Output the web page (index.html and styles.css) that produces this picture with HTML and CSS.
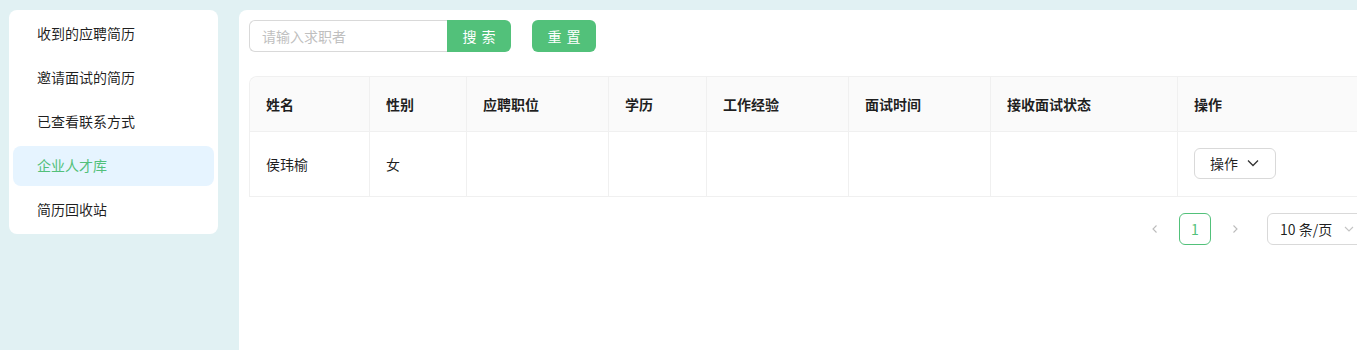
FILE: index.html
```html
<!DOCTYPE html>
<html lang="zh-CN">
<head>
    <meta charset="UTF-8">
    <meta name="viewport" content="width=device-width, initial-scale=1.0">
    <title>企业人才库</title>
    <link rel="stylesheet" href="styles.css">
</head>
<body>
    <div class="layout">
        <ul class="menu">
            <li class="menu-item">收到的应聘简历</li>
            <li class="menu-item">邀请面试的简历</li>
            <li class="menu-item">已查看联系方式</li>
            <li class="menu-item active">企业人才库</li>
            <li class="menu-item">简历回收站</li>
        </ul>

        <div class="main">
            <div class="toolbar">
                <div class="search">
                    <input type="text" placeholder="请输入求职者">
                    <button class="btn-green search-btn">搜 索</button>
                </div>
                <button class="btn-green reset-btn">重 置</button>
            </div>

            <table class="table">
                <thead>
                    <tr>
                        <th class="c1">姓名</th>
                        <th class="c2">性别</th>
                        <th class="c3">应聘职位</th>
                        <th class="c4">学历</th>
                        <th class="c5">工作经验</th>
                        <th class="c6">面试时间</th>
                        <th class="c7">接收面试状态</th>
                        <th>操作</th>
                    </tr>
                </thead>
                <tbody>
                    <tr>
                        <td>侯玮榆</td>
                        <td>女</td>
                        <td></td>
                        <td></td>
                        <td></td>
                        <td></td>
                        <td></td>
                        <td>
                            <button class="op-btn">操作
                                <svg width="14" height="14" viewBox="0 0 14 14"><path d="M2 4.5 L7 9.5 L12 4.5" fill="none" stroke="#333" stroke-width="1.3"/></svg>
                            </button>
                        </td>
                    </tr>
                </tbody>
            </table>

            <div class="pager">
                <span class="pg-arrow">
                    <svg width="10" height="10" viewBox="0 0 10 10"><path d="M6.5 1.5 L3 5 L6.5 8.5" fill="none" stroke="#bbb" stroke-width="1.1"/></svg>
                </span>
                <span class="pg-item current">1</span>
                <span class="pg-arrow">
                    <svg width="10" height="10" viewBox="0 0 10 10"><path d="M3.5 1.5 L7 5 L3.5 8.5" fill="none" stroke="#bbb" stroke-width="1.1"/></svg>
                </span>
                <div class="pg-size">
                    <span>10 条/页</span>
                    <svg width="12" height="12" viewBox="0 0 12 12"><path d="M2 4 L6 8 L10 4" fill="none" stroke="#c4c4c4" stroke-width="1.1"/></svg>
                </div>
            </div>
        </div>
    </div>
</body>
</html>
```

FILE: styles.css
```css
body {
    margin: 0;
    padding: 0;
    background-color: #e1f1f3;
    font-family: "Noto Sans CJK SC", "Noto Sans", sans-serif;
    font-size: 14px;
    color: rgba(0, 0, 0, 0.88);
    overflow: hidden;
    height: 350px;
}

.layout {
    display: flex;
    align-items: flex-start;
    gap: 21px;
    padding: 10px 0 0 9px;
}

/* menu on the left */
.menu {
    list-style: none;
    margin: 0;
    padding: 4px;
    width: 201px;
    background: #fff;
    border-radius: 8px;
    display: flex;
    flex-direction: column;
    gap: 4px;
    flex-shrink: 0;
}
.menu-item {
    height: 40px;
    line-height: 38px;
    padding-left: 24px;
    border-radius: 8px;
}
.menu-item.active {
    background: #e6f4ff;
    color: #52c07a;
}

.main {
    width: 1118px;
    flex-shrink: 0;
    min-height: 330px;
    background: #fff;
    border-radius: 8px 0 0 0;
    padding: 10px;
}

.toolbar {
    display: flex;
    gap: 21px;
}
.search {
    display: flex;
}
.search input {
    width: 198px;
    height: 32px;
    box-sizing: border-box;
    border: 1px solid #d9d9d9;
    border-right: none;
    border-radius: 6px 0 0 6px;
    padding: 0 12px;
    font-family: inherit;
    font-size: 14px;
    outline: none;
}
.search input::placeholder {
    color: #bfbfbf;
}
.btn-green {
    height: 32px;
    width: 64px;
    border: none;
    background: #52c17a;
    color: #fff;
    font-family: inherit;
    font-size: 14px;
    letter-spacing: 1px;
    padding: 0 0 1px 1px;
    border-radius: 6px;
}
.search-btn {
    border-radius: 0 6px 6px 0;
}

.table {
    width: 100%;
    margin-top: 24px;
    border-collapse: separate;
    border-spacing: 0;
    border: 1px solid #f0f0f0;
    border-bottom: none;
    border-radius: 8px 8px 0 0;
}
.table th, .table td {
    text-align: left;
    padding: 0 16px 1px;
    border-right: 1px solid #f0f0f0;
    border-bottom: 1px solid #f0f0f0;
}
.table th:last-child, .table td:last-child {
    border-right: none;
}
.table th {
    height: 53px;
    background: #fafafa;
    font-weight: 600;
    color: rgba(0, 0, 0, 0.88);
}
.table th:first-child {
    border-top-left-radius: 8px;
}
.table td {
    height: 63px;
}
.c1 { width: 87px; }
.c2 { width: 64px; }
.c3 { width: 109px; }
.c4 { width: 65px; }
.c5 { width: 109px; }
.c6 { width: 109px; }
.c7 { width: 154px; }

.op-btn {
    display: inline-flex;
    align-items: center;
    gap: 8px;
    height: 31px;
    padding: 0 15px 1px 15px;
    background: #fff;
    border: 1px solid #d9d9d9;
    border-radius: 6px;
    font-family: inherit;
    font-size: 14px;
    color: rgba(0, 0, 0, 0.88);
}

.pager {
    display: flex;
    justify-content: flex-end;
    align-items: center;
    gap: 8px;
    margin-top: 16px;
}
.pg-arrow, .pg-item {
    width: 32px;
    height: 32px;
    box-sizing: border-box;
    display: flex;
    align-items: center;
    justify-content: center;
}
.pg-item.current {
    border: 1px solid #52c17a;
    border-radius: 6px;
    color: #52c17a;
}
.pg-size {
    margin-left: 8px;
    width: 100px;
    height: 32px;
    box-sizing: border-box;
    border: 1px solid #d9d9d9;
    border-radius: 6px;
    display: flex;
    align-items: center;
    justify-content: space-between;
    padding: 0 11px 0 12px;
}
```
